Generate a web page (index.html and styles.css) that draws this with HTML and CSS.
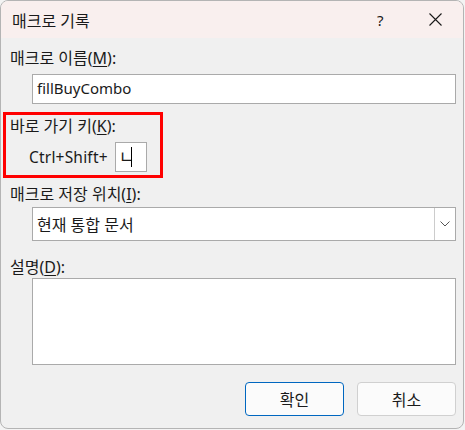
FILE: index.html
```html
<!DOCTYPE html>
<html lang="ko">
<head>
  <meta charset="UTF-8">
  <title>매크로 기록</title>
  <link rel="stylesheet" href="styles.css">
</head>
<body>
  <div class="window">
    <div class="titlebar">
      <span class="title">매크로 기록</span>
      <span class="help">?</span>
      <svg class="close" width="13" height="13" viewBox="0 0 13 13"><path d="M0.5 0.5 L12.5 12.5 M12.5 0.5 L0.5 12.5" stroke="#1a1a1a" stroke-width="1.1"/></svg>
    </div>
    <div class="content">
      <div class="label first">매크로 이름(<u>M</u>):</div>
      <div class="field name">fillBuyCombo</div>

      <div class="marked">
        <div class="label">바로 가기 키(<u>K</u>):</div>
        <div class="shortcut">
          <span>Ctrl+Shift+</span>
          <div class="keybox"><span class="jamo">ㄴ</span><span class="caret"></span></div>
        </div>
      </div>

      <div class="label store">매크로 저장 위치(<u>I</u>):</div>
      <div class="field combo">
        <span class="value">현재 통합 문서</span>
        <span class="arrow"><svg width="10" height="6" viewBox="0 0 10 6"><path d="M0.5 0.5 L5 5 L9.5 0.5" fill="none" stroke="#555" stroke-width="1"/></svg></span>
      </div>

      <div class="label">설명(<u>D</u>):</div>
      <div class="field desc"></div>

      <div class="buttons">
        <button class="btn primary">확인</button>
        <button class="btn">취소</button>
      </div>
    </div>
  </div>
</body>
</html>
```

FILE: styles.css
```css
body { margin: 0; background: #f3f3f3; font-family: "Noto Sans", "Noto Sans CJK KR", sans-serif; color: #1a1a1a; }
.window { width: 462px; height: 427px; border: 1px solid #b4b4b4; border-radius: 8px; background: #f0f0f0; overflow: hidden; }
.titlebar { height: 37px; background: #f9efee; display: flex; align-items: center; padding-left: 11px; }
.title { font-size: 16px; flex: 1; }
.help { font-size: 15px; width: 12px; margin-right: 40px; }
.close { margin-right: 21px; }
.content { padding: 0 7px 0 9px; }
.label { font-size: 16px; line-height: 20px; margin-top: 16px; margin-bottom: 3px; }
.label.first { margin-top: 10px; }
.label.store { margin-top: 6px; }
.label u { text-decoration-thickness: 1px; text-underline-offset: 2px; }
.field { background: #fff; border: 1px solid #aaa; margin-left: 22px; box-sizing: border-box; }
.name { height: 30px; font-size: 15px; line-height: 26px; padding-left: 4px; margin-top: 6px; }
.marked { width: 160px; height: 66px; box-sizing: border-box; border: 3px solid #f00; margin: 8px 0 0 -7px; padding-left: 4px; }
.marked .label { margin-top: 1px; }
.shortcut { display: flex; align-items: center; margin-left: 19px; margin-top: 6px; font-size: 15.5px; letter-spacing: 0.2px; }
.keybox { width: 32px; height: 30px; background: #fff; border: 1px solid #aaa; box-sizing: border-box; margin-left: 7px; display: flex; align-items: center; padding-left: 3px; }
.jamo { font-size: 17px; line-height: 20px; }
.caret { width: 1px; height: 20px; background: #000; margin-left: -4px; }
.combo { height: 34px; display: flex; align-items: center; margin-top: 3px; }
.combo .value { flex: 1; padding-left: 4px; font-size: 16px; }
.arrow { width: 20px; height: 32px; border-left: 1px solid #ccc; display: flex; align-items: center; justify-content: center; }
.desc { height: 87px; margin-top: -2px; }
.buttons { display: flex; justify-content: flex-end; gap: 13px; margin-top: 17px; }
.btn { width: 99px; height: 34px; border-radius: 4px; border: 1px solid #d0d0d0; background: #fbfbfb; font-family: inherit; font-size: 16px; color: #1a1a1a; padding: 0; }
.btn.primary { border-color: #0067c0; }
```
